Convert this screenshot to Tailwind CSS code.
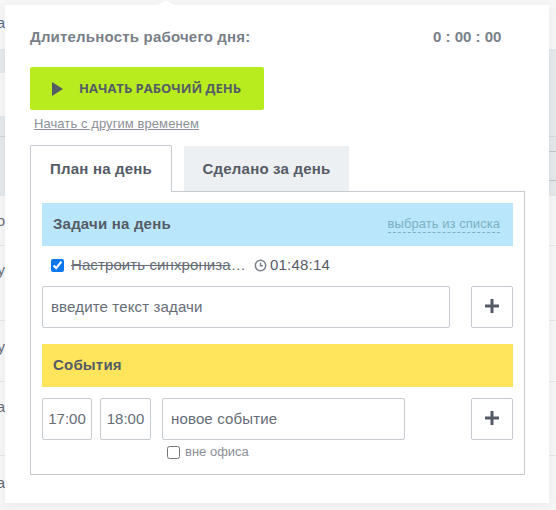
<!DOCTYPE html>
<html lang="en">
<head>
    <meta charset="UTF-8">
    <title>Рабочий день</title>
    <script src="https://cdn.jsdelivr.net/npm/@tailwindcss/browser@4"></script>
</head>
<body class="bg-[#f6f6f7] h-[510px] w-[556px] overflow-hidden relative font-['Liberation_Sans',sans-serif] text-[#555b66]">

    <!-- Page behind the popover: left strip -->
    <div class="absolute left-0 top-0 w-[5px] h-[510px] overflow-hidden flex flex-col text-[15px] leading-none text-[#666c76]">
        <div class="h-[49px] flex items-center justify-end pb-[5px] text-[#55708a]">а</div>
        <div class="h-[24px] bg-[#e4e8eb]"></div>
        <div class="h-[43px]"></div>
        <div class="h-[21px] bg-[#e4e8eb] border-b border-[#ccd1d6]"></div>
        <div class="h-[59px] bg-[#e4e8eb]"></div>
        <div class="h-[50px] flex items-center justify-end border-b border-[#e4e6e9]">о</div>
        <div class="h-[75px] flex items-center justify-end border-b border-[#e4e6e9] pb-[27px]">у</div>
        <div class="h-[61px] flex items-center justify-end border-b border-[#e4e6e9] pb-[10px]">у</div>
        <div class="h-[74px] flex items-center justify-end border-b border-[#e4e6e9] pb-[24px]">а</div>
        <div class="h-[54px] flex items-end justify-end pb-[20px]">а</div>
    </div>

    <!-- Page behind the popover: right strip -->
    <div class="absolute right-0 top-0 w-[7px] h-[510px] flex flex-col">
        <div class="h-[49px]"></div>
        <div class="h-[88px] bg-[#e4e8eb] border-b border-[#d3d7db]"></div>
        <div class="h-[15px] bg-[#e4e8eb] border-b border-[#bfc4c9]"></div>
        <div class="h-[29px] bg-[#e4e8eb] border-b border-[#bfc4c9]"></div>
        <div class="h-[15px] bg-[#e4e8eb]"></div>
        <div class="h-[50px] border-b border-[#e4e6e9]"></div>
        <div class="h-[75px] border-b border-[#e4e6e9]"></div>
        <div class="h-[61px] border-b border-[#e4e6e9]"></div>
        <div class="h-[74px] border-b border-[#e4e6e9]"></div>
    </div>

    <!-- Popover -->
    <div class="absolute left-[5px] top-[5px] w-[544px] h-[498px] bg-white shadow-[0_2px_10px_rgba(0,0,0,0.06)] pl-[25px] pr-[24px]">
        <div class="absolute left-[153px] top-[-5px] w-0 h-0 border-x-[8px] border-b-[5px] border-x-transparent border-b-white"></div>

        <div class="flex items-center h-[20px] mt-[22px] text-[15px] font-bold text-[#797f88]">
            <span class="w-[403px] whitespace-nowrap tracking-[0.2px]">Длительность рабочего дня:</span>
            <span class="whitespace-nowrap">0 : 00 : 00</span>
        </div>

        <button class="mt-[20px] flex items-center w-[234px] h-[43px] bg-[#b9ec1e] rounded-[2px] pl-[22px] text-[13px] font-['Open_Sans',sans-serif] font-bold text-[#555b66] whitespace-nowrap">
            <svg width="11" height="14" viewBox="0 0 11 14" class="mr-[16px]"><path d="M0 0 L11 7 L0 14 Z" fill="#555b66"/></svg>
            НАЧАТЬ РАБОЧИЙ ДЕНЬ
        </button>
        <a class="block ml-[4px] mt-[6px] h-[16px] text-[13px] leading-[16px] tracking-[0.08px] text-[#8b9098] underline whitespace-nowrap">Начать с другим временем</a>

        <div class="flex mt-[13px] relative z-10 h-[47px]">
            <div class="w-[142px] h-[47px] pt-[1px] bg-white border border-b-0 border-[#c5cbd1] rounded-t-[2px] flex items-center justify-center text-[15px] font-bold tracking-[0.2px]">План на день</div>
            <div class="ml-[12px] mt-[1px] w-[165px] h-[45px] pt-[1px] bg-[#ecf0f3] flex items-center justify-center text-[15px] font-bold tracking-[0.2px]">Сделано за день</div>
        </div>

        <div class="w-[495px] h-[284px] -mt-[1px] border border-[#c5cbd1] px-[11px] pt-[11px]">
            <div class="flex items-center justify-between h-[43px] bg-[#b9e6fa] pl-[11px] pr-[13px]">
                <span class="text-[15px] font-bold tracking-[0.2px]">Задачи на день</span>
                <span class="text-[13px] tracking-[0.05px] text-[#7bb0c4] border-b border-dashed border-[#7bb0c4] leading-[16px]">выбрать из списка</span>
            </div>
            <div class="flex items-center h-[40px] pl-[9px] pb-[2px]">
                <input type="checkbox" checked class="w-[13px] h-[13px] accent-[#0b76ef] m-0">
                <span class="ml-[7px] w-[178px] truncate text-[15px] tracking-[0.1px] line-through text-[#666c76]">Настроить синхронизацию</span>
                <svg width="13" height="13" viewBox="0 0 13 13" class="ml-[5px]" fill="none" stroke="#7c828b" stroke-width="1.5"><circle cx="6.5" cy="6.5" r="5.2"/><path d="M6.5 3.5 V6.8 H9"/></svg>
                <span class="ml-[3px] text-[15px] tracking-[0.2px] text-[#555b66]">01:48:14</span>
            </div>
            <div class="flex justify-between">
                <div class="w-[408px] h-[42px] border border-[#c5cbd1] rounded-[2px] flex items-center pl-[8px] text-[15px] tracking-[0.15px] text-[#666c76]">введите текст задачи</div>
                <button class="w-[42px] h-[42px] border border-[#c5cbd1] rounded-[2px] flex items-center justify-center pb-[2px]">
                    <svg width="14" height="14" viewBox="0 0 14 14"><path d="M0 7 H14 M7 0 V14" stroke="#555b66" stroke-width="3"/></svg>
                </button>
            </div>
            <div class="flex items-center h-[43px] mt-[16px] bg-[#ffe55c] pl-[11px] text-[15px] font-bold tracking-[0.2px]">События</div>
            <div class="flex mt-[11px] text-[15px] text-[#666c76]">
                <div class="w-[50px] h-[42px] border border-[#c5cbd1] rounded-[2px] flex items-center justify-center">17:00</div>
                <div class="ml-[8px] w-[51px] h-[42px] border border-[#c5cbd1] rounded-[2px] flex items-center justify-center">18:00</div>
                <div class="ml-[11px] w-[243px] h-[42px] border border-[#c5cbd1] rounded-[2px] flex items-center pl-[8px] tracking-[0.15px]">новое событие</div>
                <button class="ml-[66px] w-[42px] h-[42px] border border-[#c5cbd1] rounded-[2px] flex items-center justify-center pb-[2px]">
                    <svg width="14" height="14" viewBox="0 0 14 14"><path d="M0 7 H14 M7 0 V14" stroke="#555b66" stroke-width="3"/></svg>
                </button>
            </div>
            <label class="flex items-center ml-[125px] mt-[5px] h-[14px] text-[13px] text-[#8b9098]">
                <input type="checkbox" class="w-[13px] h-[13px] m-0">
                <span class="ml-[5px]">вне офиса</span>
            </label>
        </div>
    </div>
</body>
</html>
